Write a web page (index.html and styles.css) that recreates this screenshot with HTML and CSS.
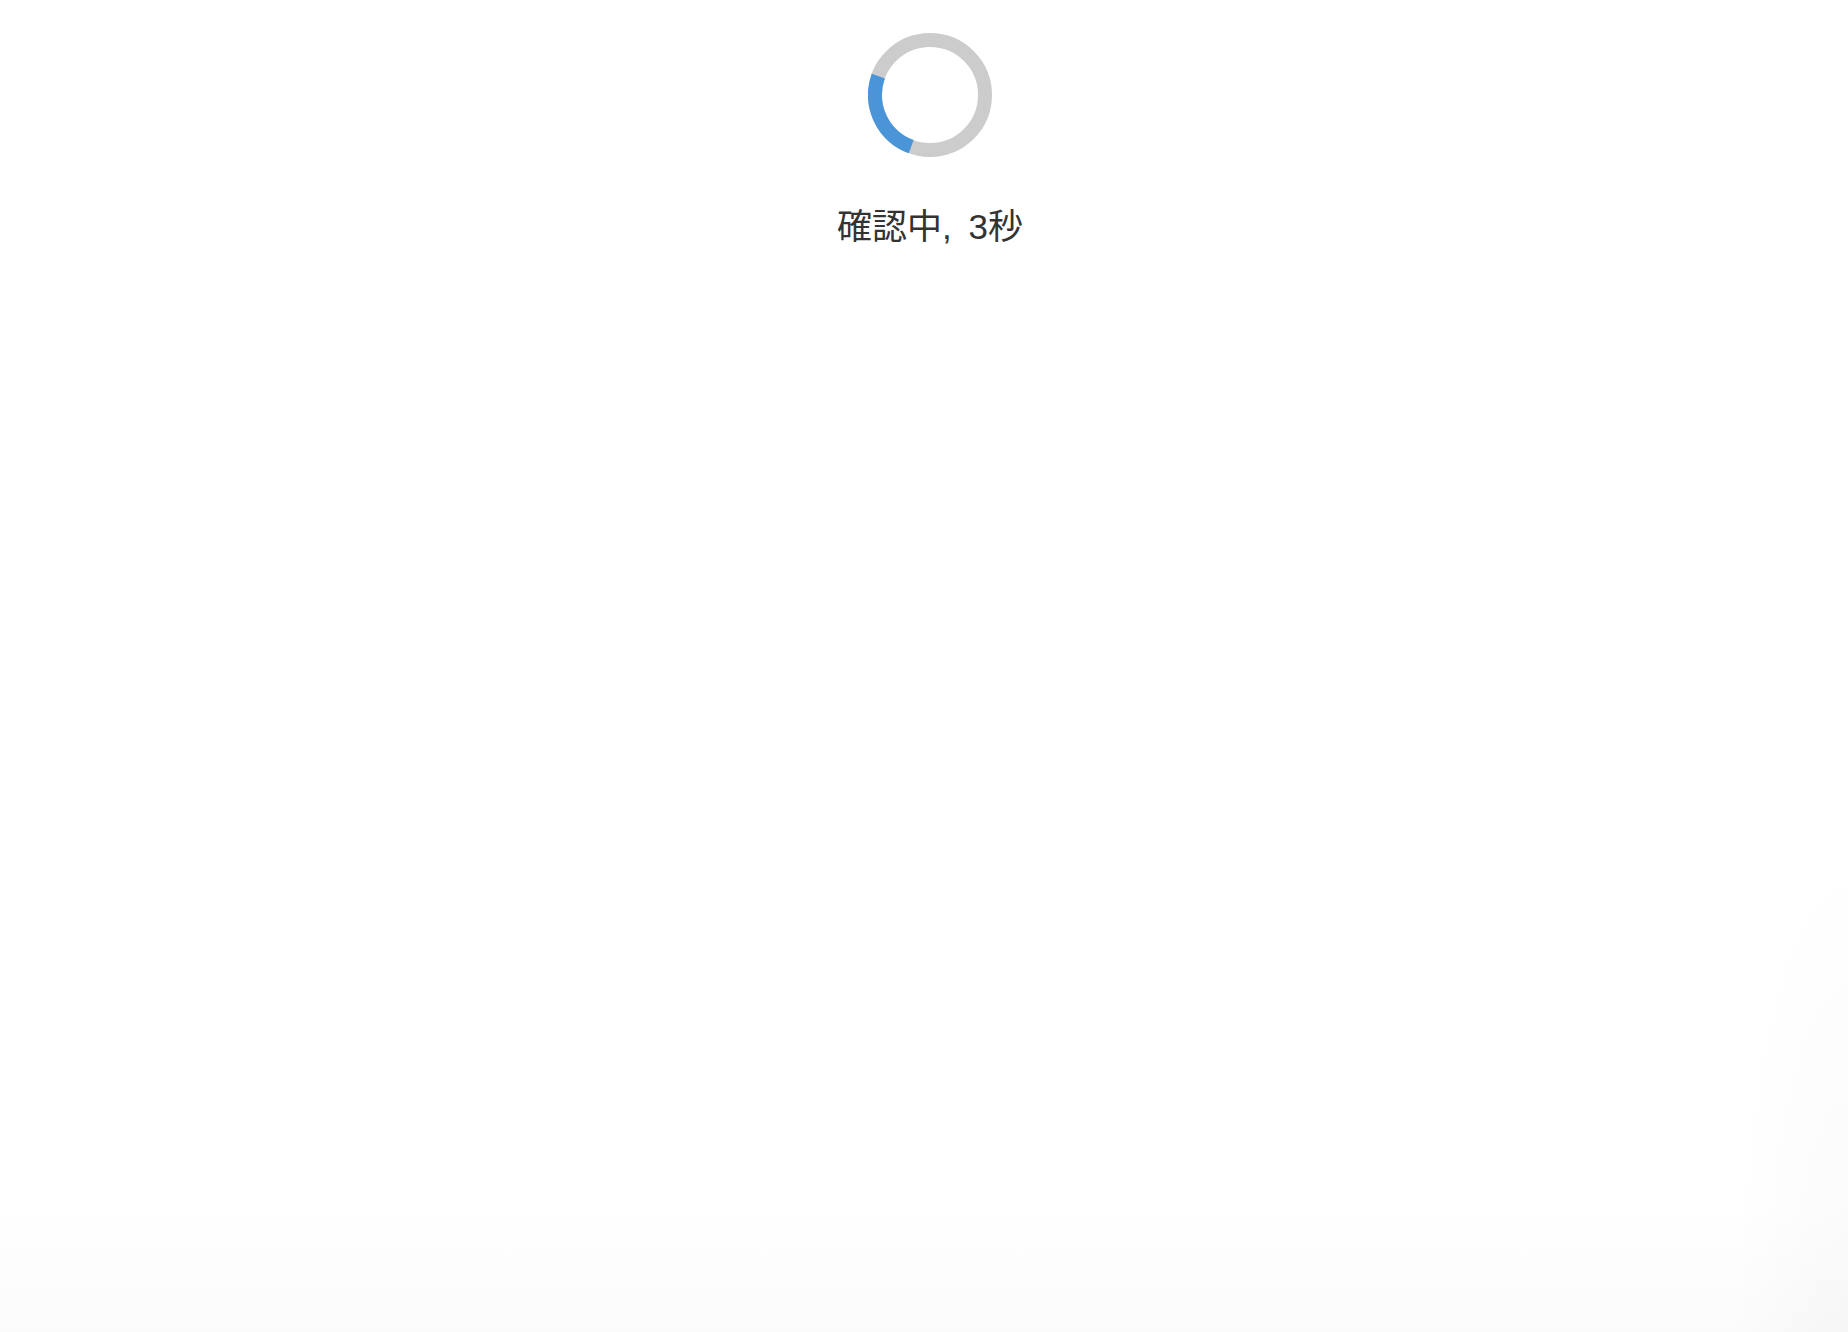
FILE: index.html
```html
<!DOCTYPE html>
<html lang="ja">
<head>
<meta charset="utf-8">
<title>確認中</title>
<link rel="stylesheet" href="styles.css">
</head>
<body>
<main class="page">
  <div class="loader">
    <svg class="spinner" width="124" height="124" viewBox="0 0 124 124" aria-hidden="true">
      <circle class="track" cx="62" cy="62" r="55"/>
      <circle class="arc" cx="62" cy="62" r="55"/>
    </svg>
    <p class="status">確認中, 3秒</p>
  </div>
</main>
</body>
</html>
```
FILE: styles.css
```css
html, body {
  margin: 0;
  padding: 0;
  height: 100%;
}

body {
  background:
    radial-gradient(ellipse 120px 500px at 100% 100%, rgba(0,0,0,0.018), rgba(0,0,0,0) 100%),
    linear-gradient(to bottom, rgba(0,0,0,0) 90%, rgba(0,0,0,0.016) 100%),
    #ffffff;
  font-family: "Liberation Sans", "Noto Sans CJK JP", sans-serif;
  color: #333333;
}

.page {
  display: flex;
  justify-content: center;
  padding-top: 33px;
  padding-left: 12px;
}

.loader {
  display: flex;
  flex-direction: column;
  align-items: center;
}

.spinner {
  display: block;
}

.spinner circle {
  fill: none;
  stroke-width: 14;
}

.spinner .track {
  stroke: #cccccc;
}

.spinner .arc {
  stroke: #4a94d8;
  stroke-dasharray: 86.4 345.6;
  transform-origin: 62px 62px;
  transform: rotate(110deg);
}

.status {
  margin: 46px 0 0;
  font-size: 35px;
  line-height: 48px;
  word-spacing: 7px;
  color: #333333;
}
```
